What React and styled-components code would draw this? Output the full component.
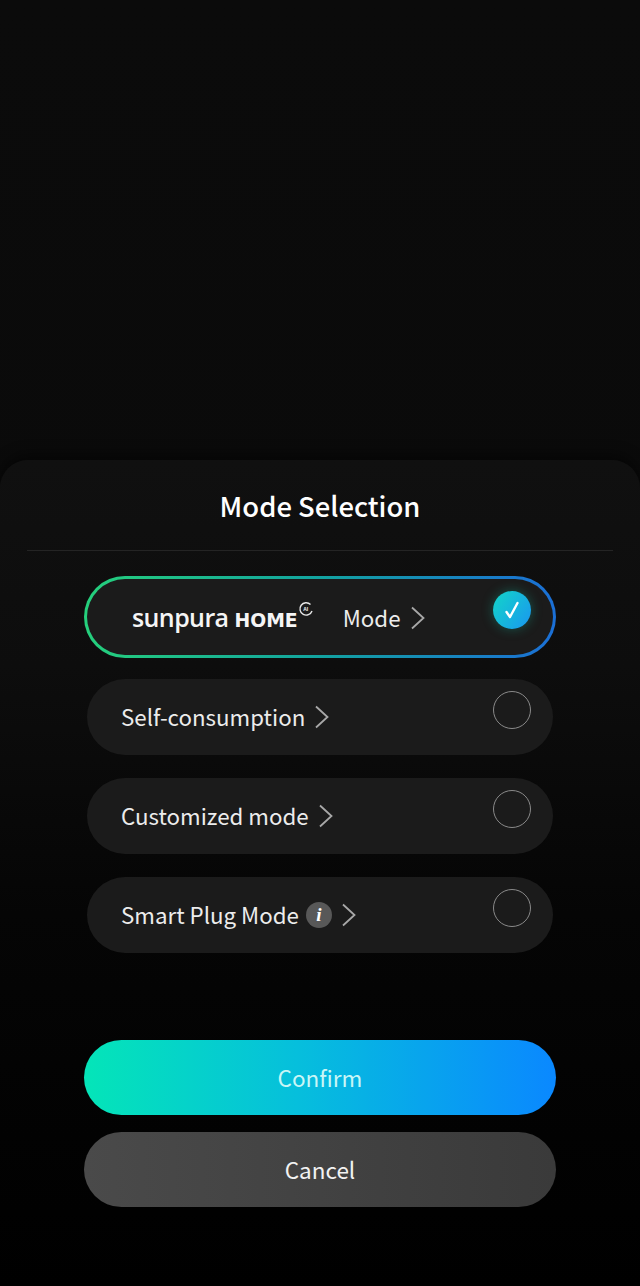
import React from 'react'
import styled, { createGlobalStyle } from 'styled-components'

const GlobalStyle = createGlobalStyle`
  html, body {
    margin: 0;
    padding: 0;
    background: #090909;
  }
  * {
    box-sizing: border-box;
  }
`

const Page = styled.div`
  width: 640px;
  height: 1286px;
  padding-top: 460px;
  background: linear-gradient(180deg, #0b0b0b 0%, #090909 100%);
  font-family: "Noto Sans CJK SC", "Noto Sans", sans-serif;
  color: #f4f4f4;
`

const Sheet = styled.div`
  height: 826px;
  border-radius: 28px 28px 0 0;
  background: linear-gradient(180deg, #101010 0%, #0d0d0d 25%, #050505 55%, #000 100%);
  box-shadow: 0 -6px 14px rgba(0, 0, 0, 0.45);
`

const Title = styled.h1`
  height: 91px;
  margin: 0 27px;
  padding-top: 25px;
  border-bottom: 1px solid #242424;
  font-size: 27.4px;
  line-height: 40px;
  font-weight: 500;
  text-align: center;
  color: #fff;
`

const List = styled.div`
  display: flex;
  flex-direction: column;
  padding: 25px 84px 0;
`

const Row = styled.div`
  display: flex;
  justify-content: space-between;
  height: ${p => (p.$selected ? '82px' : '76px')};
  margin: ${p => (p.$selected ? '0 0 21px' : '0 3px 23px')};
  padding: ${p => (p.$selected ? '0 22px 0 45px' : '0 22px 0 34px')};
  border-radius: 41px;
  background: #1b1b1b;
  ${p => p.$selected && `
    border: 3px solid transparent;
    background: linear-gradient(#1b1b1b, #1b1b1b) padding-box,
      linear-gradient(90deg, #25d07c 0%, #12a3a0 50%, #1b6fd6 100%) border-box;
  `}
`

const Label = styled.div`
  display: flex;
  align-items: center;
  gap: 10px;
  padding-bottom: ${p => (p.$selected ? '0' : '2px')};
  font-size: 22.3px;
  line-height: 30px;
  color: #ececec;
`

const Logo = styled.div`
  display: flex;
  align-items: baseline;
  margin: 4px 35px 0 0;
  color: #f5f5f5;
  position: relative;
`

const LogoWord = styled.span`
  font-family: "Open Sans", sans-serif;
  font-size: 25px;
  line-height: 30px;
  font-weight: 600;
  letter-spacing: -0.6px;
`

const LogoHome = styled.span`
  margin-left: 6px;
  font-family: "DejaVu Sans", sans-serif;
  font-size: 18.8px;
  line-height: 30px;
  font-weight: 700;
`

const LogoMark = styled.span`
  position: absolute;
  right: -16px;
  top: -1px;
  width: 16px;
  height: 16px;
  display: flex;
  align-items: center;
  justify-content: center;
  font-family: "Liberation Sans", sans-serif;
  font-size: 5px;
  line-height: 16px;
  font-weight: 700;
`

const Radio = styled.div`
  flex: none;
  width: 38px;
  height: 38px;
  margin-top: 12px;
  border-radius: 50%;
  border: 1px solid #8a8a8a;
  display: flex;
  align-items: center;
  justify-content: center;
  ${p => p.$checked && `
    border: none;
    background: linear-gradient(125deg, #12d6c8 0%, #1a96f0 100%);
    box-shadow: 0 0 12px rgba(20, 200, 170, 0.35);
  `}
`

const Info = styled.span`
  width: 26px;
  height: 26px;
  margin: 2px 0 0 -3px;
  border-radius: 50%;
  background: #585858;
  color: #fff;
  font-family: "Liberation Serif", serif;
  font-style: italic;
  font-weight: 700;
  font-size: 19px;
  line-height: 26px;
  text-align: center;
`

const Actions = styled.div`
  display: flex;
  flex-direction: column;
  gap: 17px;
  padding: 64px 84px 0;
`

const Button = styled.button`
  height: 75px;
  border: none;
  border-radius: 38px;
  padding: 0 0 1px;
  font-family: inherit;
  font-size: 22.5px;
  color: ${p => (p.$primary ? '#c9f6f6' : '#f2f2f2')};
  background: ${p => (p.$primary
    ? 'linear-gradient(90deg, #04e5b8 0%, #06bfdc 45%, #0a88ff 100%)'
    : 'linear-gradient(90deg, #4a4a4a 0%, #3a3a3a 100%)')};
`

const ChevronIcon = styled.svg`
  flex: none;
  margin-top: 2px;
`

const Chevron = () => (
  <ChevronIcon width="14" height="24" viewBox="0 0 14 24" fill="none" stroke="#a8a8a8" strokeWidth="1.8">
    <path d="M1 1.5 L12.5 12 L1 22.5" />
  </ChevronIcon>
)

const Check = () => (
  <svg width="20" height="20" viewBox="0 0 20 20" fill="none" stroke="#fff" strokeWidth="2.4" strokeLinecap="round" strokeLinejoin="round">
    <path d="M4.5 12 L8 17 L15.5 3" />
  </svg>
)

const modes = [
  { name: 'Self-consumption' },
  { name: 'Customized mode' },
  { name: 'Smart Plug Mode', info: true },
]

export default function App() {
  return (
    <Page>
      <GlobalStyle />
      <Sheet>
        <Title>Mode Selection</Title>
        <List>
          <Row $selected>
            <Label $selected>
              <Logo>
                <LogoWord>sunpura</LogoWord>
                <LogoHome>HOME</LogoHome>
                <LogoMark>
                  <svg width="16" height="16" viewBox="0 0 16 16" fill="none" stroke="#e8e8e8" strokeWidth="1.4" style={{ position: 'absolute' }}>
                    <path d="M12.5 3.5 A6.2 6.2 0 1 0 14 10" />
                  </svg>
                  AI
                </LogoMark>
              </Logo>
              Mode
              <Chevron />
            </Label>
            <Radio $checked>
              <Check />
            </Radio>
          </Row>
          {modes.map(m => (
            <Row key={m.name}>
              <Label>
                {m.name}
                {m.info && <Info>i</Info>}
                <Chevron />
              </Label>
              <Radio />
            </Row>
          ))}
        </List>
        <Actions>
          <Button $primary>Confirm</Button>
          <Button>Cancel</Button>
        </Actions>
      </Sheet>
    </Page>
  )
}
